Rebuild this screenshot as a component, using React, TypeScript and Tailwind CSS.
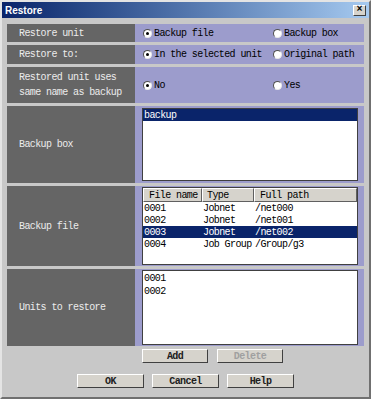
import type { ReactNode } from 'react';

const mono = { fontFamily: '"Liberation Mono", "Courier New", monospace' };

function Radio({ checked, label }: { checked?: boolean; label: string }) {
  return (
    <div className="flex items-center gap-[2px]">
      <span className="w-[9px] h-[9px] rounded-full bg-white border border-t-[#505050] border-l-[#505050] border-r-[#e8e8e8] border-b-[#e8e8e8] flex items-center justify-center">
        {checked && <span className="w-[3px] h-[3px] rounded-full bg-black" />}
      </span>
      <span className="text-black">{label}</span>
    </div>
  );
}

function Row({ label, height, children }: { label: ReactNode; height: string; children: ReactNode }) {
  return (
    <div className={`flex ${height}`}>
      <div className="w-[128px] bg-[#656565] text-[#ececec] flex items-center pl-[12px] leading-[15px]">
        {label}
      </div>
      <div className="flex-1 bg-[#9c9ccc] flex">{children}</div>
    </div>
  );
}

function Button({ label, disabled, width = 'w-[67px]' }: { label: string; disabled?: boolean; width?: string }) {
  return (
    <div
      className={`${width} h-[14px] bg-[#d6d3cc] border border-t-white border-l-white border-r-[#404040] border-b-[#404040] flex items-center justify-center font-bold ${
        disabled ? 'text-[#a0a0a0]' : 'text-[#202020]'
      }`}
    >
      {label}
    </div>
  );
}

const files = [
  { name: '0001', type: 'Jobnet', path: '/net000' },
  { name: '0002', type: 'Jobnet', path: '/net001' },
  { name: '0003', type: 'Jobnet', path: '/net002', selected: true },
  { name: '0004', type: 'Job Group', path: '/Group/g3' },
];

export default function App() {
  return (
    <div
      className="w-[371px] h-[399px] bg-[#c8c8c8] border-[2px] border-t-[#e4e4e4] border-l-[#e4e4e4] border-r-[#707070] border-b-[#707070] flex flex-col text-[10px] tracking-[-0.6px]"
      style={mono}
    >
      {/* Title bar */}
      <div className="h-[16px] bg-gradient-to-r from-[#0a246a] to-[#a6caf0] flex items-center justify-between pl-[3px] pr-[3px] tracking-normal">
        <span
          className="text-white font-bold text-[10px]"
          style={{ fontFamily: '"Liberation Sans", Arial, sans-serif' }}
        >
          Restore
        </span>
        <span className="w-[13px] h-[11px] bg-[#d6d3cc] border border-t-white border-l-white border-r-[#404040] border-b-[#404040] flex items-center justify-center text-black text-[10px] font-bold leading-none">
          ×
        </span>
      </div>

      {/* Settings table */}
      <div className="flex flex-col gap-[3px] px-[5px] pt-[6px]">
        <Row label="Restore unit" height="h-[18px]">
          <div className="flex items-center pl-[8px]">
            <div className="w-[130px]">
              <Radio checked label="Backup file" />
            </div>
            <Radio label="Backup box" />
          </div>
        </Row>

        <Row label="Restore to:" height="h-[19px]">
          <div className="flex items-center pl-[8px]">
            <div className="w-[130px]">
              <Radio checked label="In the selected unit" />
            </div>
            <Radio label="Original path" />
          </div>
        </Row>

        <Row
          label={
            <div>
              <div>Restored unit uses</div>
              <div>same name as backup</div>
            </div>
          }
          height="h-[36px]"
        >
          <div className="flex items-center pl-[8px]">
            <div className="w-[130px]">
              <Radio checked label="No" />
            </div>
            <Radio label="Yes" />
          </div>
        </Row>

        <Row label="Backup box" height="h-[77px]">
          <div className="flex-1 pl-[7px] pr-[6px] py-[2px] flex">
            <div className="flex-1 bg-white border border-[#404040]">
              <div className="h-[12px] bg-[#0a246a] text-white flex items-center pl-[1px]">backup</div>
            </div>
          </div>
        </Row>

        <Row label="Backup file" height="h-[80px]">
          <div className="flex-1 pl-[7px] pr-[6px] py-[1px] flex">
            <div className="flex-1 bg-white border border-[#404040] flex flex-col">
              <div className="flex h-[14px] text-black">
                <div className="w-[59px] bg-[#d6d3cc] border border-t-white border-l-white border-r-[#606060] border-b-[#606060] flex items-center pl-[5px]">
                  File name
                </div>
                <div className="w-[52px] bg-[#d6d3cc] border border-t-white border-l-white border-r-[#606060] border-b-[#606060] flex items-center pl-[4px]">
                  Type
                </div>
                <div className="flex-1 bg-[#d6d3cc] border border-t-white border-l-white border-r-[#606060] border-b-[#606060] flex items-center pl-[5px]">
                  Full path
                </div>
              </div>
              {files.map((f) => (
                <div
                  key={f.name}
                  className={`flex h-[12px] items-center ${f.selected ? 'bg-[#0a246a] text-white' : 'text-black'}`}
                >
                  <div className="w-[60px] pl-[1px]">{f.name}</div>
                  <div className="w-[52px]">{f.type}</div>
                  <div className="flex-1">{f.path}</div>
                </div>
              ))}
            </div>
          </div>
        </Row>

        <Row label="Units to restore" height="h-[77px]">
          <div className="flex-1 pl-[7px] pr-[6px] py-[1px] flex">
            <div className="flex-1 bg-white border border-[#404040] text-black pl-[1px] pt-[1px] leading-[13px]">
              <div>0001</div>
              <div>0002</div>
            </div>
          </div>
        </Row>
      </div>

      {/* Add / Delete */}
      <div className="flex gap-[9px] pl-[140px] pt-[3px]">
        <Button label="Add" width="w-[66px]" />
        <Button label="Delete" disabled width="w-[66px]" />
      </div>

      {/* OK / Cancel / Help */}
      <div className="flex justify-center gap-[8px] pt-[11px]">
        <Button label="OK" />
        <Button label="Cancel" />
        <Button label="Help" />
      </div>
    </div>
  );
}
